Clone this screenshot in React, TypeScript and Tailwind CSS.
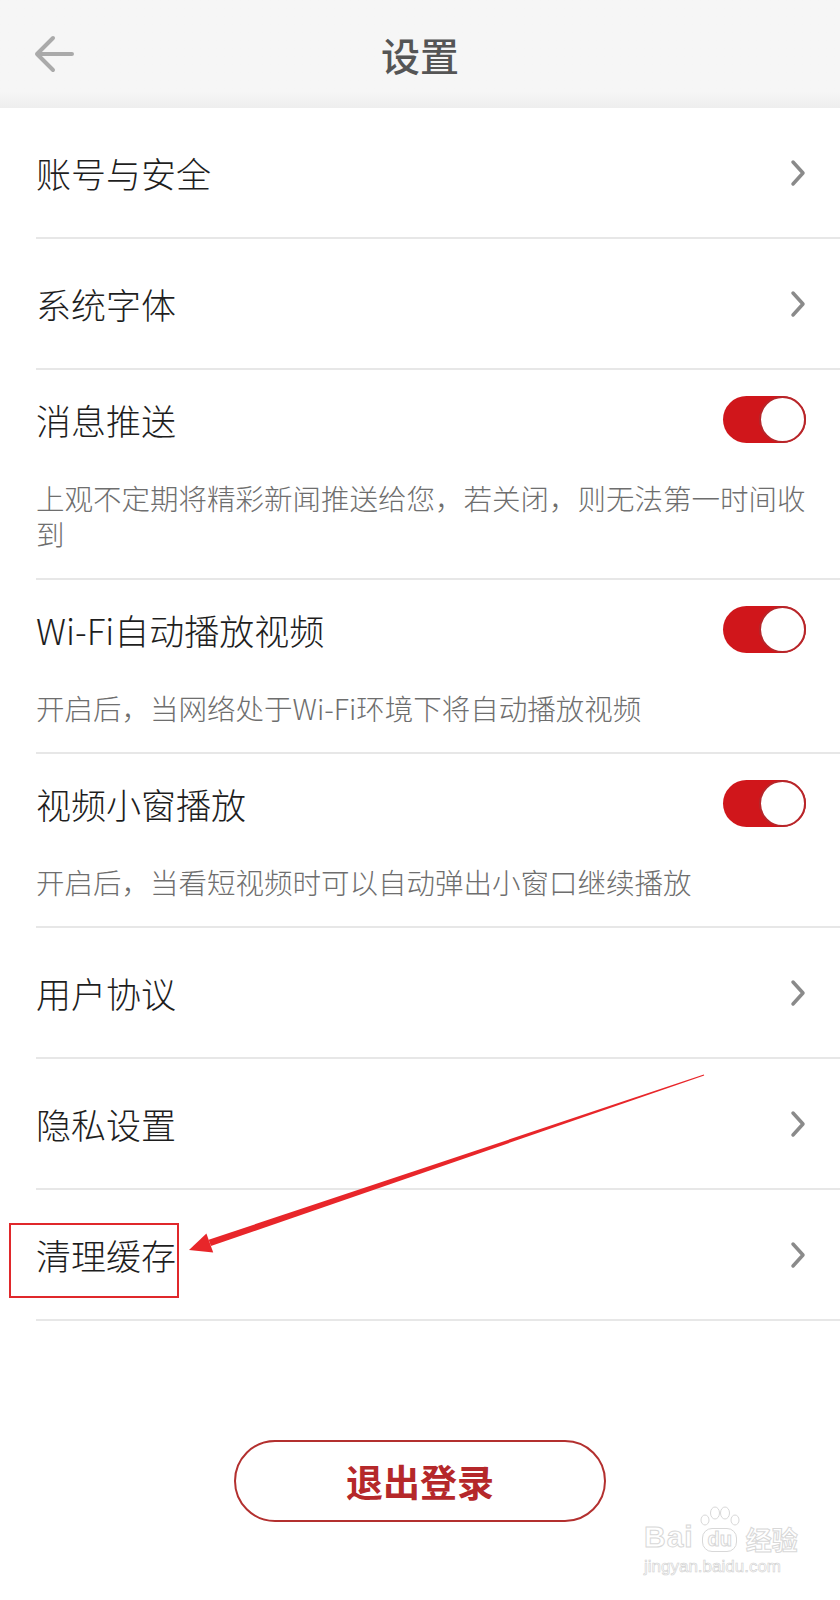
import React from "react";

type Row =
  | { kind: "link"; title: string }
  | { kind: "toggle"; title: string; desc: string };

const rows: Row[] = [
  { kind: "link", title: "账号与安全" },
  { kind: "link", title: "系统字体" },
  {
    kind: "toggle",
    title: "消息推送",
    desc: "上观不定期将精彩新闻推送给您，若关闭，则无法第一时间收到",
  },
  {
    kind: "toggle",
    title: "Wi-Fi自动播放视频",
    desc: "开启后，当网络处于Wi-Fi环境下将自动播放视频",
  },
  {
    kind: "toggle",
    title: "视频小窗播放",
    desc: "开启后，当看短视频时可以自动弹出小窗口继续播放",
  },
  { kind: "link", title: "用户协议" },
  { kind: "link", title: "隐私设置" },
  { kind: "link", title: "清理缓存" },
];

const Chevron = () => (
  <svg width="16" height="28" viewBox="0 0 16 28" fill="none">
    <path
      d="M3 3 L13 14 L3 25"
      stroke="#8a8a8a"
      strokeWidth="3.5"
      strokeLinecap="round"
      strokeLinejoin="round"
    />
  </svg>
);

const Toggle = () => (
  <div className="relative w-[83px] h-[47px] rounded-full bg-[#d0161b] flex justify-end">
    <div className="w-[47px] h-[47px] rounded-full bg-white border-2 border-[#b7262a]" />
  </div>
);

function SettingRow({ row }: { row: Row }) {
  if (row.kind === "link") {
    return (
      <div className="h-[131px] border-b-2 border-[#e7e7e7] flex items-center justify-between pr-[34px]">
        <span className="text-[35px] font-light leading-none text-[#1e1e1e]">{row.title}</span>
        <Chevron />
      </div>
    );
  }
  return (
    <div className="border-b-2 border-[#e7e7e7] pt-[24px] pb-[26px] pr-[34px]">
      <div className="h-[50px] flex items-center justify-between">
        <span className="text-[35px] font-light leading-none text-[#1e1e1e]">{row.title}</span>
        <Toggle />
      </div>
      <p className="mt-[36px] text-[28.5px] font-light leading-[36px] text-[#6e6e6e]">
        {row.desc}
      </p>
    </div>
  );
}

export default function App() {
  return (
    <div
      className="relative w-[840px] h-[1600px] bg-white overflow-hidden"
      style={{ fontFamily: '"Noto Sans CJK SC", "Noto Sans", sans-serif' }}
    >
      <header className="relative h-[108px] bg-gradient-to-b from-[#f6f6f6] from-85% to-[#eeeeee] flex items-center justify-center">
        <svg
          className="absolute left-[33px] top-[34px]"
          width="42"
          height="40"
          viewBox="0 0 42 40"
          fill="none"
        >
          <path
            d="M39 20 H4 M4 20 L20 4 M4 20 L20 36"
            stroke="#aaaaaa"
            strokeWidth="4"
            strokeLinecap="round"
            strokeLinejoin="round"
          />
        </svg>
        <h1 className="text-[39px] font-medium text-[#555] leading-none">设置</h1>
      </header>

      <div className="pl-[36px]">
        {rows.map((row) => (
          <SettingRow key={row.title} row={row} />
        ))}
      </div>

      <div className="flex justify-center mt-[119px]">
        <button className="w-[372px] h-[82px] rounded-full border-2 border-[#b3302f] text-[#b5282a] text-[37px] font-bold leading-none">
          退出登录
        </button>
      </div>

      {/* annotation overlay */}
      <div className="absolute left-[9px] top-[1223px] w-[170px] h-[75px] border-2 border-[#e0282b]" />
      <svg
        className="absolute left-0 top-0 pointer-events-none"
        width="840"
        height="1600"
        viewBox="0 0 840 1600"
      >
        <polygon
          points="210.9,1246.1 208.7,1239.7 703.8,1074.5 704.2,1075.5"
          fill="#e8262a"
        />
        <polygon points="189,1250 213.2,1252.4 206.4,1233.4" fill="#e8262a" />
      </svg>

      {/* watermark */}
      <div className="absolute left-[644px] top-[1506px] flex flex-col items-start text-white [-webkit-text-stroke:1px_#d8d8d8]">
        <div className="flex items-end leading-none">
          <span className="text-[30px] font-bold tracking-[1px]" style={{ fontFamily: '"Liberation Sans", sans-serif' }}>
            Bai
          </span>
          <span className="relative mx-[1px] flex flex-col items-center">
            <svg width="50" height="22" viewBox="0 0 50 22" fill="none" stroke="#d8d8d8" strokeWidth="1">
              <ellipse cx="10" cy="14" rx="4" ry="5" />
              <ellipse cx="20" cy="7" rx="4.5" ry="6" />
              <ellipse cx="30" cy="7" rx="4.5" ry="6" />
              <ellipse cx="40" cy="14" rx="4" ry="5" />
            </svg>
            <span
              className="text-[20px] font-bold leading-none px-[4px] pb-[2px] rounded-[10px] border border-[#d8d8d8]"
              style={{ fontFamily: '"Liberation Sans", sans-serif' }}
            >
              du
            </span>
          </span>
          <span className="text-[26px] font-bold">经验</span>
        </div>
        <span
          className="mt-[6px] text-[17px] leading-none [-webkit-text-stroke:0.6px_#d0d0d0]"
          style={{ fontFamily: '"Liberation Sans", sans-serif' }}
        >
          jingyan.baidu.com
        </span>
      </div>
    </div>
  );
}
